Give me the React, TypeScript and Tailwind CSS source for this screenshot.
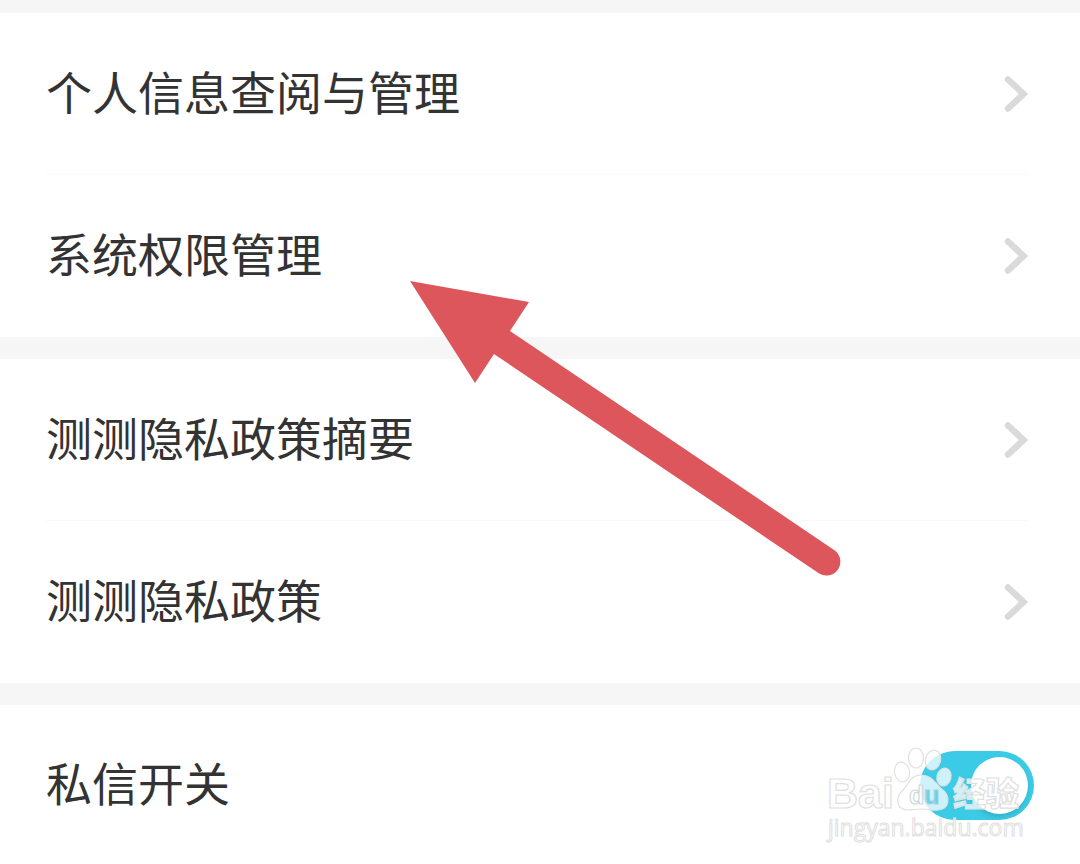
import { useState } from "react";

const infoItems = ["个人信息查阅与管理", "系统权限管理"];
const policyItems = ["测测隐私政策摘要", "测测隐私政策"];

const Chevron = () => (
  <svg className="shrink-0" width="24" height="36" viewBox="0 0 24 36" fill="none">
    <path d="M4 3.5 19.5 18 4 32.5" stroke="#dadada" strokeWidth="6.5" strokeLinecap="round" />
  </svg>
);

const MenuGroup = ({ items }: { items: string[] }) => (
  <ul className="bg-white pl-[46px] pr-[52px] divide-y divide-[#f9f9f9]">
    {items.map((item) => (
      <li key={item} className="h-[162px]">
        <a href="#" className="flex h-full items-center justify-between">
          <span className="pb-2">{item}</span>
          <Chevron />
        </a>
      </li>
    ))}
  </ul>
);

const Arrow = () => (
  <svg
    className="absolute left-[410px] top-[280px] pointer-events-none"
    width="434"
    height="298"
    viewBox="410 280 434 298"
  >
    <path
      d="M410 281 529 302 510 331 834.8 550.4A14 14 0 0 1 819.2 573.6L494 354 475 383Z"
      fill="#dc565c"
    />
  </svg>
);

const Watermark = () => (
  <svg
    className="absolute right-[52px] top-10 pointer-events-none"
    width="204"
    height="104"
    viewBox="824 745 204 104"
    fill="#ffffff"
    fillOpacity="0.75"
    stroke="#e0e0e0"
    strokeWidth="1.2"
    fontFamily='"Liberation Sans", "Noto Sans CJK SC", sans-serif'
  >
    <text x="827" y="808" fontSize="43" fontWeight="700">
      Bai
    </text>
    <ellipse cx="902" cy="772" rx="7.5" ry="10" transform="rotate(-10 902 772)" />
    <ellipse cx="916" cy="758" rx="7.5" ry="10" />
    <ellipse cx="933" cy="760" rx="7.5" ry="10" transform="rotate(15 933 760)" />
    <ellipse cx="944" cy="777" rx="7" ry="9" transform="rotate(15 944 777)" />
    <path d="M921 775c-11 0-12 9-18 15-7 6-8 19 4 20 6 0 9-1 15-1s10 2 16 1c12-1 12-13 6-19-9-7-11-16-23-16Z" />
    <text x="909" y="804" fontSize="25" fontWeight="700" stroke="#cfd9dc">
      d
      <tspan fill="#3ecce6" stroke="#a9cfd8">
        u
      </tspan>
    </text>
    <text x="953" y="806" fontSize="33" fontWeight="900">
      经验
    </text>
    <text x="828" y="836" fontSize="23" strokeWidth="1" fontFamily='"Open Sans", sans-serif'>
      jingyan.baidu.com
    </text>
  </svg>
);

export default function App() {
  const [enabled, setEnabled] = useState(true);

  return (
    <main className="relative min-h-screen overflow-hidden bg-[#f6f6f6] pt-[13px] font-['Noto_Sans_CJK_SC',sans-serif] text-[46px] leading-[60px] text-[#333333]">
      <div className="flex flex-col gap-[22px]">
        <MenuGroup items={infoItems} />
        <MenuGroup items={policyItems} />
        <div className="relative flex h-[159px] items-center justify-between bg-white px-[46px] pt-px">
          <label htmlFor="message-switch" className="pb-2">
            私信开关
          </label>
          <input
            id="message-switch"
            type="checkbox"
            role="switch"
            checked={enabled}
            onChange={(e) => setEnabled(e.target.checked)}
            className="h-[69px] w-[114px] appearance-none rounded-full bg-[#d9d9d9] p-[6px] before:block before:size-[57px] before:rounded-full before:bg-white before:shadow-md checked:bg-[#3bcbe6] checked:before:ml-auto"
          />
          <Watermark />
        </div>
      </div>
      <Arrow />
    </main>
  );
}
